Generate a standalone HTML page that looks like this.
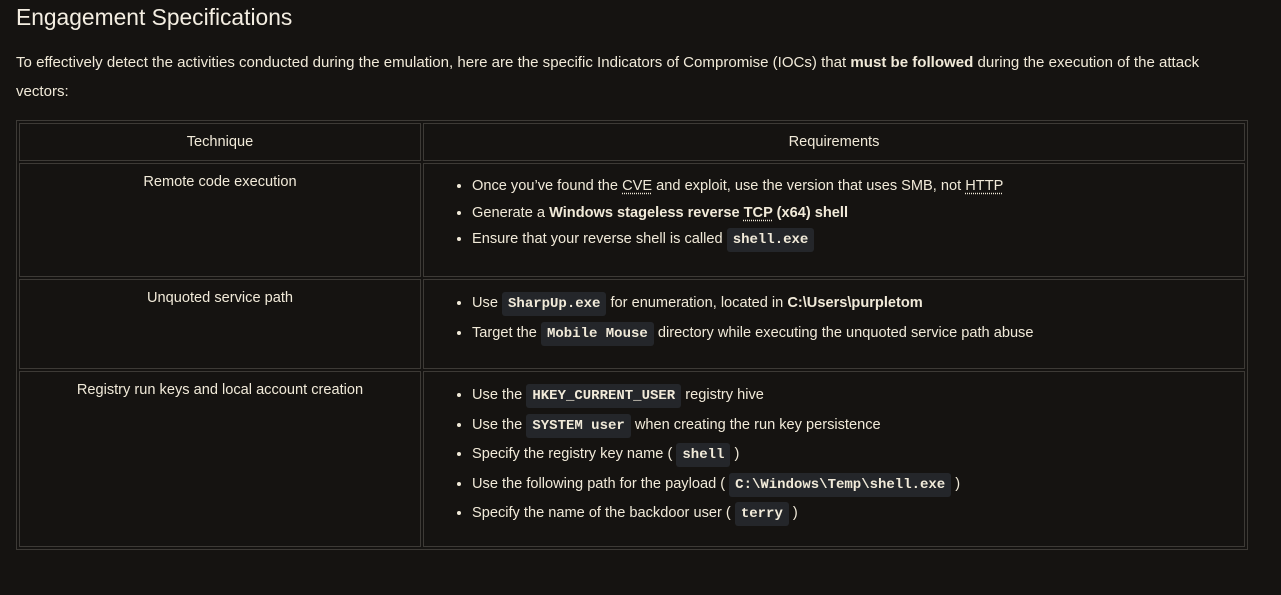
<!DOCTYPE html>
<html><head><meta charset="utf-8"><style>
body{margin:0;background:#151311;color:#f1ead9;font-family:"Liberation Sans",sans-serif;font-size:14.6px;width:1281px;height:595px;overflow:hidden;position:relative}
h2{position:absolute;left:16px;top:4px;margin:0;font-weight:normal;font-size:22.8px;color:#f4eee2}
p{position:absolute;left:16px;top:48px;margin:0;width:1200px;line-height:29px;font-size:15.05px}
table{position:absolute;left:16px;top:120px;width:1232px;height:430px;border:1px solid #3d3a36;border-spacing:2px;border-collapse:separate}
td,th{border:1px solid #3d3a36;padding:0;font-weight:normal}
th{height:36px;text-align:center}
td.l{text-align:center;vertical-align:top;padding-top:10px;width:400px}
td.r{vertical-align:top;padding-top:9px}
ul{margin:0;padding-left:48px}
li{line-height:26.5px}
ul.t li{line-height:28.6px}
code{font-family:"Liberation Mono",monospace;font-weight:bold;background:#24262a;padding:4px 6px;border-radius:3px;font-size:14px}
abbr{text-decoration:underline dotted;text-underline-offset:3px}
b{font-weight:bold}
</style></head><body>
<h2>Engagement Specifications</h2>
<p>To effectively detect the activities conducted during the emulation, here are the specific Indicators of Compromise (IOCs) that <b>must be followed</b> during the execution of the attack vectors:</p>
<table>
<tr><th>Technique</th><th>Requirements</th></tr>
<tr style="height:114px"><td class="l">Remote code execution</td><td class="r"><ul>
<li>Once you’ve found the <abbr>CVE</abbr> and exploit, use the version that uses SMB, not <abbr>HTTP</abbr></li>
<li>Generate a <b>Windows stageless reverse <abbr>TCP</abbr> (x64) shell</b></li>
<li>Ensure that your reverse shell is called <code>shell.exe</code></li></ul></td></tr>
<tr style="height:90px"><td class="l">Unquoted service path</td><td class="r"><ul class="t">
<li>Use <code>SharpUp.exe</code> for enumeration, located in <b>C:\Users\purpletom</b></li>
<li>Target the <code>Mobile Mouse</code> directory while executing the unquoted service path abuse</li></ul></td></tr>
<tr><td class="l">Registry run keys and local account creation</td><td class="r"><ul class="t">
<li>Use the <code>HKEY_CURRENT_USER</code> registry hive</li>
<li>Use the <code>SYSTEM user</code> when creating the run key persistence</li>
<li>Specify the registry key name ( <code>shell</code> )</li>
<li>Use the following path for the payload ( <code>C:\Windows\Temp\shell.exe</code> )</li>
<li>Specify the name of the backdoor user ( <code>terry</code> )</li></ul></td></tr>
</table>
</body></html>
